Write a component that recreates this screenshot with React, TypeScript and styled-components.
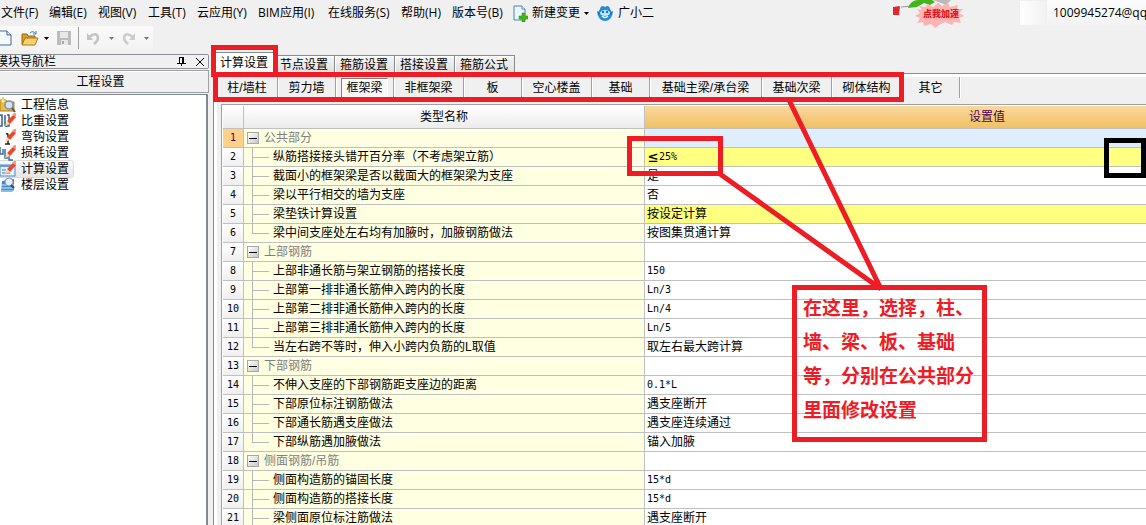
import React from 'react';
import styled, { createGlobalStyle, css } from 'styled-components';

const Global = createGlobalStyle`
  *, *::before, *::after { box-sizing: border-box; }
  body {
    margin: 0;
    background: #f0f0f0;
    color: #000;
    font: 12px/16px "Open Sans", "Noto Sans CJK SC", sans-serif;
  }
  button, input { font: inherit; color: inherit; }
`;

const song = `"Liberation Sans", "Noto Sans CJK SC", sans-serif`;

const Page = styled.div`
  position: relative;
  display: flex;
  flex-direction: column;
  height: 100vh;
  overflow: hidden;
`;

const plainButton = css`
  border: 0;
  padding: 0;
  margin: 0;
  background: none;
  white-space: nowrap;
  text-align: left;
`;

/* ---- top bars ---- */
const MenuBar = styled.header`
  display: flex;
  align-items: center;
  flex: none;
  height: 26px;
`;
const Menus = styled.nav`
  display: grid;
  grid-template-columns: 48px 49px 50px 49px 61px 70px 73px 51px 61px;
  padding-left: 1px;
`;
const MenuButton = styled.button`
  ${plainButton}
`;
const IconButton = styled.button`
  ${plainButton}
  display: flex;
  align-items: center;
  gap: 4px;
`;
const Extras = styled.div`
  display: flex;
  gap: 8px;
  flex: 1;
`;
const Booster = styled.button`
  ${plainButton}
  position: relative;
  align-self: flex-start;
  width: 80px;
  height: 30px;
  margin-right: 49px;
`;
const BoosterLabel = styled.span`
  position: absolute;
  left: 32px;
  top: 6px;
  color: #e01820;
  font-size: 9px;
  font-weight: 900;
`;
const Avatar = styled.div`
  width: 25px;
  height: 24px;
  background: linear-gradient(90deg, #fff, #f2f2f2);
`;
const Account = styled.div`
  width: 99px;
  height: 26px;
  margin-left: 2px;
  padding-left: 6px;
  overflow: hidden;
  background: linear-gradient(#fcfcfc, #f2f2f2);
  line-height: 26px;
  white-space: nowrap;
`;
const ToolBar = styled.div`
  display: flex;
  align-items: center;
  flex: none;
  width: 153px;
  height: 24px;
  margin-bottom: 2px;
  background: linear-gradient(#fafafa, #f3f3f3);
`;
const Divider = styled.span`
  width: 1px;
  height: 22px;
  margin: 0 8px 0 6px;
  background: #a0a0a0;
`;
const Tool = styled.button<{ $w: number }>`
  ${plainButton}
  display: flex;
  width: ${p => p.$w}px;
  svg { display: block; }
`;

/* ---- navigation panel ---- */
const Main = styled.div`
  display: flex;
  flex: 1;
  min-height: 0;
`;
const Side = styled.aside`
  display: flex;
  flex-direction: column;
  flex: none;
  width: 209px;
  margin-right: 4px;
  padding-top: 2px;
  font-family: ${song};
`;
const SideTitle = styled.div`
  display: flex;
  align-items: center;
  gap: 10px;
  height: 15px;
  margin-bottom: 1px;
  padding-right: 4px;
  border: 1px solid #8c8f94;
  border-left: 0;
  border-radius: 0 2px 2px 0;
  white-space: nowrap;
`;
const Clipped = styled.h2`
  display: flex;
  justify-content: flex-end;
  width: 56px;
  margin: 0 auto 0 0;
  overflow: hidden;
  font: inherit;
`;
const SideHeader = styled.button`
  height: 23px;
  padding: 0 7px 0 0;
  border: 1px solid #a0a0a0;
  border-width: 1px 1px 1px 0;
  background: #f0f0f0;
  box-shadow: inset 0 1px #fff;
`;
const Tree = styled.ul`
  flex: 1;
  margin: 1px 1px 0 0;
  padding: 2px 0 0;
  border: solid #828790;
  border-width: 1px 2px 0 0;
  background: #fff;
  list-style: none;
`;
const TreeItem = styled.li<{ $on?: boolean }>`
  display: flex;
  align-items: center;
  gap: 5px;
  width: 73px;
  height: 16px;
  border-radius: 0 3px 3px 0;
  ${p => p.$on && 'background: linear-gradient(#fafafa, #e6e6e6); box-shadow: 0 0 0 1px #dadada;'}
  svg { display: block; flex: none; }
`;

/* ---- settings area ---- */
const Content = styled.main`
  display: flex;
  flex-direction: column;
  flex: 1;
  min-width: 0;
  font-family: ${song};
`;
const Tabs = styled.div`
  display: flex;
  align-items: flex-end;
  flex: none;
  height: 21px;
  padding-left: 2px;
`;
const Tab = styled.button<{ $on?: boolean }>`
  ${plainButton}
  width: 60px;
  height: ${p => (p.$on ? 21 : 18)}px;
  padding-left: 5px;
  border: solid #868a91;
  border-width: 1px 1px 0 0;
  background: ${p => (p.$on ? '#fff' : 'linear-gradient(#f6f6f6, #dedede)')};
  box-shadow: inset 1px 1px #fff;
`;
const Pane = styled.div`
  display: flex;
  flex: 1;
  min-height: 0;
  padding: 3px 0 0 3px;
  border: solid #868a91;
  border-width: 1px 0 0 1px;
  background: #fff;
`;
const PaneBody = styled.div`
  display: flex;
  flex-direction: column;
  flex: 1;
  min-width: 0;
  background: #f0f0f0;
`;
const Parts = styled.div`
  display: flex;
  flex: none;
  height: 27px;
`;
const Part = styled.button<{ $w: number; $on?: boolean }>`
  ${plainButton}
  display: flex;
  align-items: center;
  justify-content: center;
  flex: none;
  width: ${p => p.$w}px;
  height: 21px;
  border-right: 1px solid #a0a0a0;
  box-shadow: 1px 0 #fff;
  span {
    padding: 1px 4px;
    border: 1px solid transparent;
    ${p => p.$on && 'background: #f9f9f9; border-color: #808080 #fff #fff #808080;'}
  }
`;
const GridFrame = styled.div`
  flex: 1;
  min-height: 0;
  margin-left: 4px;
  padding: 1px 0 0 1px;
  overflow: hidden;
  border: solid #a0a0a0;
  border-width: 1px 0 0 1px;
  background: #fff;
`;
const Table = styled.table`
  width: 100%;
  table-layout: fixed;
  border-spacing: 0;
  line-height: 18px;
  th, td {
    height: 19px;
    padding: 0;
    border: solid #c0c0c0;
    border-width: 0 1px 1px 0;
    font-weight: 400;
    text-align: left;
    white-space: nowrap;
  }
  th:last-child, td:last-child { border-right: 0; }
`;
const NumCol = styled.col`width: 21px;`;
const NameCol = styled.col`width: 401px;`;
const HeadRow = styled.tr`
  && th {
    height: 23px;
    background: linear-gradient(#fff, #ececec);
    text-align: center;
  }
  && th:last-child {
    padding-left: 183px;
    background: linear-gradient(#f9d89f, #f1c062);
    color: #500050;
  }
`;
const NumCell = styled.th<{ $on?: boolean }>`
  && { text-align: center; }
  background: ${p => (p.$on ? '#ffd08a' : 'linear-gradient(#fff, #efefef)')};
  color: ${p => (p.$on ? '#500050' : '#000')};
  font: 10px/18px "DejaVu Sans Mono", monospace;
`;
const NameCell = styled.td`
  background: #ffffe1;
`;
const GroupLine = styled.div`
  display: flex;
  align-items: center;
  gap: 5px;
  height: 18px;
  padding-left: 3px;
  color: #808080;
`;
const Toggle = styled.button`
  ${plainButton}
  display: flex;
  align-items: center;
  justify-content: center;
  width: 12px;
  height: 12px;
  border: 1px solid #a8a8a8;
  background: linear-gradient(135deg, #fff, #c8c8c8);
  &::before { content: ""; width: 8px; height: 1px; background: #000; }
`;
const ItemLine = styled.div<{ $last?: boolean }>`
  display: flex;
  height: 18px;
  padding-left: 8px;
  &::before {
    content: "";
    flex: none;
    width: 17px;
    height: ${p => (p.$last ? 10 : 19)}px;
    margin-right: 4px;
    background:
      linear-gradient(#b8b8b8, #b8b8b8) 0 0 / 1px 100% no-repeat,
      linear-gradient(#b8b8b8, #b8b8b8) 0 9px / 17px 1px no-repeat;
  }
`;
const ValueCell = styled.td<{ $bg: string }>`
  && { padding-left: 2px; }
  background: ${p => p.$bg};
`;
const Mono = styled.div`
  display: flex;
  height: 18px;
  font: 10px/18px "DejaVu Sans Mono", monospace;
`;
const Wide = styled.span`
  width: 12px;
  font-size: 16px;
  text-align: center;
`;

/* ---- annotations drawn over the window ---- */
const Mark = styled.div<{ $x: number; $y: number; $w: number; $h: number }>`
  position: absolute;
  left: ${p => p.$x}px;
  top: ${p => p.$y}px;
  width: ${p => p.$w}px;
  height: ${p => p.$h}px;
  border: 5px solid #ee1c24;
  pointer-events: none;
`;
const EdgeMark = styled.div`
  position: absolute;
  right: 0;
  top: 138px;
  width: 42px;
  height: 40px;
  border: 5px solid #000;
  pointer-events: none;
`;
const Note = styled(Mark)`
  padding: 0 6px;
  color: #ee1c24;
  font: 700 19px/34px "Noto Sans CJK SC", sans-serif;
  white-space: nowrap;
`;
const Arrows = styled.svg`
  position: absolute;
  left: 700px;
  top: 90px;
  pointer-events: none;
`;

const Caret = ({ c = '#000' }: { c?: string }) => (
  <svg width="5" height="3"><path d="M0 0h5L2.500 3z" fill={c} /></svg>
);

const pencil = <><path d="M7 8l6-6 3 2-6 7z" fill="#e8482c" /><path d="M12 2l2-2h2v4z" fill="#f59a80" /><path d="M7 8l3 3-5 2z" fill="#f3d6a0" /></>;

const navIcons = [
  <svg width="16" height="16"><path d="M0 3h6l1 2h7v9H0z" fill="#e9bd4a" stroke="#a87a1c" /><path d="M3 0l1 3 3 1-3 1-1 3-1-3-2-1 2-1z" fill="#fff3a0" stroke="#d9a520" strokeWidth=".5" /><circle cx="9" cy="8" r="4" fill="#cfe6fa" stroke="#7f8fa5" strokeWidth="1.500" /><path d="M12 11l3 4" stroke="#555" strokeWidth="2" /></svg>,
  <svg width="16" height="16"><path d="M0 2h2v11H0M5 2v9q0 3 2 2M7 2h2v11H7" fill="none" stroke="#35608f" strokeWidth="1.500" />{pencil}</svg>,
  <svg width="16" height="16"><path d="M6 5q2-1 2 1v9M5 15h5" fill="none" stroke="#222" strokeWidth="1.500" />{pencil}</svg>,
  <svg width="16" height="16"><path d="M0 2v7h3V4M5 4v9h3M9 9v6h4" fill="none" stroke="#3a6ea5" strokeWidth="1.500" />{pencil}</svg>,
  <svg width="16" height="16"><rect x="0" y="4" width="15" height="11" fill="#e6f2fd" stroke="#4d8ad0" /><path d="M0 4h15v2H0z" fill="#5b9be0" /><path d="M2 9h4M2 12h8" stroke="#4377b5" />{pencil}</svg>,
  <svg width="16" height="16"><path d="M2 4l12-2v11l-2 2H1z" fill="#3b8fd0" /><path d="M1 8h13M1 11h13M1 14h12" stroke="#d7ecfb" /><circle cx="9" cy="5" r="4" fill="#e3eef7" stroke="#8296a8" /><path d="M11 8l3 3" stroke="#444" strokeWidth="2" /></svg>,
];

const navNames = ['工程信息', '比重设置', '弯钩设置', '损耗设置', '计算设置', '楼层设置'];
const menus = ['文件(F)', '编辑(E)', '视图(V)', '工具(T)', '云应用(Y)', 'BIM应用(I)', '在线服务(S)', '帮助(H)', '版本号(B)'];
const tabs = ['计算设置', '节点设置', '箍筋设置', '搭接设置', '箍筋公式'];
const parts: [string, number][] = [
  ['柱/墙柱', 61], ['剪力墙', 58], ['框架梁', 58], ['非框架梁', 70], ['板', 58], ['空心楼盖', 70],
  ['基础', 58], ['基础主梁/承台梁', 112], ['基础次梁', 70], ['砌体结构', 70], ['其它', 58],
];

type Row = { name: string; value?: string; group?: boolean; last?: boolean; changed?: boolean };
const rows: Row[] = [
  { name: '公共部分', group: true },
  { name: '纵筋搭接接头错开百分率（不考虑架立筋）', value: '≤25%', changed: true },
  { name: '截面小的框架梁是否以截面大的框架梁为支座', value: '是' },
  { name: '梁以平行相交的墙为支座', value: '否' },
  { name: '梁垫铁计算设置', value: '按设定计算', changed: true },
  { name: '梁中间支座处左右均有加腋时，加腋钢筋做法', value: '按图集贯通计算', last: true },
  { name: '上部钢筋', group: true },
  { name: '上部非通长筋与架立钢筋的搭接长度', value: '150' },
  { name: '上部第一排非通长筋伸入跨内的长度', value: 'Ln/3' },
  { name: '上部第二排非通长筋伸入跨内的长度', value: 'Ln/4' },
  { name: '上部第三排非通长筋伸入跨内的长度', value: 'Ln/5' },
  { name: '当左右跨不等时，伸入小跨内负筋的L取值', value: '取左右最大跨计算', last: true },
  { name: '下部钢筋', group: true },
  { name: '不伸入支座的下部钢筋距支座边的距离', value: '0.1*L' },
  { name: '下部原位标注钢筋做法', value: '遇支座断开' },
  { name: '下部通长筋遇支座做法', value: '遇支座连续通过' },
  { name: '下部纵筋遇加腋做法', value: '锚入加腋', last: true },
  { name: '侧面钢筋/吊筋', group: true },
  { name: '侧面构造筋的锚固长度', value: '15*d' },
  { name: '侧面构造筋的搭接长度', value: '15*d' },
  { name: '梁侧面原位标注筋做法', value: '遇支座断开' },
];

const valueBg = (row: Row, i: number) => (i === 0 ? '#dfeefe' : row.changed ? '#ffff80' : '#fff');

const Value = ({ text = '' }: { text?: string }) => {
  if (text.startsWith('≤')) return <Mono><Wide>≤</Wide>{text.slice(1)}</Mono>;
  return /^[\x20-\x7e]+$/.test(text) ? <Mono>{text}</Mono> : <>{text}</>;
};

export default function App() {
  return (
    <Page>
      <Global />
      <MenuBar>
        <Menus>{menus.map(m => <MenuButton key={m}>{m}</MenuButton>)}</Menus>
        <Extras>
          <IconButton>
            <svg width="15" height="17"><path d="M1 1h8l3 3v11H1z" fill="#eaf5fd" stroke="#4388b8" /><path d="M9 1v3h3" fill="#fff" stroke="#4388b8" /><path d="M9 8h3v3h3v3h-3v3H9v-3H6v-3h3z" fill="#46b51c" stroke="#2c8a10" strokeWidth=".5" /></svg>
            <span>新建变更</span>
            <Caret />
          </IconButton>
          <IconButton>
            <svg width="17" height="17"><path d="M3 5q0-4 3-4l2 1 2-1q3 0 3 4z" fill="#2a86cc" /><ellipse cx="8" cy="9" rx="7" ry="7" fill="#1e90e0" /><path d="M0 6l3 2-2 3zM16 6l-3 2 2 3z" fill="#1672bd" /><ellipse cx="8" cy="8" rx="5" ry="3" fill="#bfe3fa" /><circle cx="6" cy="7" r="1" fill="#124a78" /><circle cx="10" cy="7" r="1" fill="#124a78" /><path d="M5 11q3 3 6 0" stroke="#fff" fill="none" strokeWidth="1.500" /></svg>
            <span>广小二</span>
          </IconButton>
        </Extras>
        <Booster>
          <svg width="80" height="30">
            <path d="M10 7l12-1" stroke="#999" />
            <path d="M2 7l7-1-1 9-6 0z" fill="#e0282c" />
            <path d="M42 0h18l-5 5z" fill="#b9bcb9" />
            <path d="M17 8q3-8 10-8h14l3 2-5 3-6-2-7 4z" fill="#45b51e" />
            <path d="M28 6l6 1 3-3 5 3 5-4 4 3 6-3 2 4 8-2-1 4 6 0-4 4 5 3-5 2 2 5-7-1-2 3-7-3-6 3-4 3-4-4-7 2-1-4-6 1 3-5-5-2 5-3-3-4 5 1z" fill="#fcb4b4" />
          </svg>
          <BoosterLabel>点我加速</BoosterLabel>
        </Booster>
        <Avatar />
        <Account>1009945274@qq</Account>
      </MenuBar>
      <ToolBar>
        <Tool $w={21} aria-label="新建"><svg width="12" height="16"><path d="M-1 1h8l4 4v10H-1z" fill="#f4faff" stroke="#3f6c9c" /><path d="M7 1v4h4" fill="#cfe2f5" stroke="#3f6c9c" /></svg></Tool>
        <Tool $w={23} aria-label="打开"><svg width="18" height="16"><path d="M1 14V4h5l1 2h7v8z" fill="#d79a2b" stroke="#9a6a14" /><path d="M1 15l3-7h13l-3 7z" fill="#fbd36a" stroke="#a8761c" /><path d="M9 3q3-3 6 1M15 1v3h-3" fill="none" stroke="#3e7fc0" /></svg></Tool>
        <Tool $w={13} aria-label="打开列表"><Caret /></Tool>
        <Tool $w={15} aria-label="保存"><svg width="15" height="15"><path d="M0 0h14v14H0z" fill="#bcbcbc" /><path d="M3 1h8v6H3zM4 9h7v5H4z" fill="#e8e8e8" /><path d="M5 10h2v3H5z" fill="#aaa" /></svg></Tool>
        <Divider />
        <Tool $w={22} aria-label="撤销"><svg width="13" height="14"><path d="M2 6q8-6 9 1 0 3-4 6" fill="none" stroke="#c4c4c4" strokeWidth="2.500" /><path d="M0 2v7h6z" fill="#c4c4c4" /></svg></Tool>
        <Tool $w={13} aria-label="撤销列表"><Caret c="#777" /></Tool>
        <Tool $w={22} aria-label="恢复"><svg width="13" height="14"><path d="M11 6Q3 0 2 7q0 3 4 6" fill="none" stroke="#ccc" strokeWidth="2.500" /><path d="M13 2v7H7z" fill="#ccc" /></svg></Tool>
        <Tool $w={8} aria-label="恢复列表"><Caret c="#777" /></Tool>
      </ToolBar>
      <Main>
        <Side>
          <SideTitle>
            <Clipped>模块导航栏</Clipped>
            <IconButton aria-label="固定"><svg width="9" height="9"><path d="M2 .5h5M2.500 1v5M6 1v5M0 6.500h9M4.500 6v3" stroke="#000" /><path d="M5 1h2v5H5z" /></svg></IconButton>
            <IconButton aria-label="关闭"><svg width="8" height="8"><path d="M0 0l8 8M8 0L0 8" stroke="#000" /></svg></IconButton>
          </SideTitle>
          <SideHeader>工程设置</SideHeader>
          <Tree>
            {navNames.map((n, i) => <TreeItem key={n} $on={i === 4}>{navIcons[i]}<span>{n}</span></TreeItem>)}
          </Tree>
        </Side>
        <Content>
          <Tabs>{tabs.map((t, i) => <Tab key={t} $on={i === 0}>{t}</Tab>)}</Tabs>
          <Pane>
            <PaneBody>
              <Parts>{parts.map(([t, w]) => <Part key={t} $w={w} $on={t === '框架梁'}><span>{t}</span></Part>)}</Parts>
              <GridFrame>
                <Table>
                  <colgroup><NumCol /><NameCol /><col /></colgroup>
                  <thead><HeadRow><th /><th>类型名称</th><th>设置值</th></HeadRow></thead>
                  <tbody>
                    {rows.map((r, i) => (
                      <tr key={i}>
                        <NumCell scope="row" $on={i === 0}>{i + 1}</NumCell>
                        <NameCell>
                          {r.group
                            ? <GroupLine><Toggle aria-label="折叠" />{r.name}</GroupLine>
                            : <ItemLine $last={r.last}>{r.name}</ItemLine>}
                        </NameCell>
                        <ValueCell $bg={valueBg(r, i)}><Value text={r.value} /></ValueCell>
                      </tr>
                    ))}
                  </tbody>
                </Table>
              </GridFrame>
            </PaneBody>
          </Pane>
        </Content>
      </Main>
      <Mark $x={211} $y={45} $w={67} $h={32} />
      <Mark $x={213} $y={72} $w={691} $h={30} />
      <Mark $x={627} $y={136} $w={96} $h={40} />
      <EdgeMark />
      <Arrows width="200" height="204">
        <path d="M89 10L181 199M20 84L181 199" fill="none" stroke="#ee1c24" strokeWidth="5" strokeLinejoin="bevel" />
      </Arrows>
      <Note $x={792} $y={285} $w={195} $h={157}>
        在这里，选择，柱、<br />墙、梁、板、基础<br />等，分别在公共部分<br />里面修改设置
      </Note>
    </Page>
  );
}
